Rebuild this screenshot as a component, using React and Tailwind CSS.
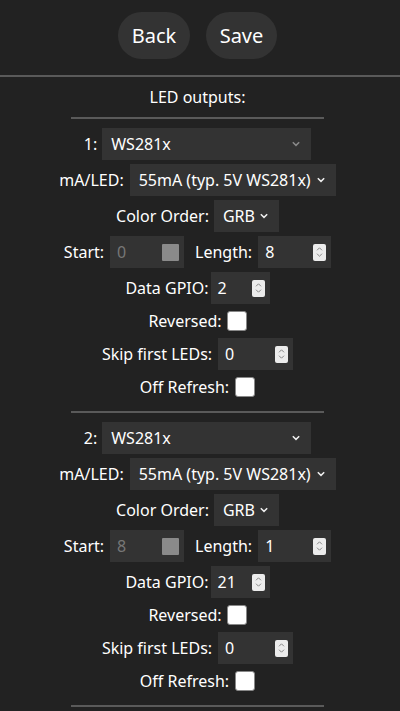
import React from "react";

const font = { fontFamily: '"Noto Sans", "Open Sans", sans-serif' };

function Chevron({ dim }) {
  return (
    <svg width="10" height="6" viewBox="0 0 10 6" className="shrink-0">
      <path
        d="M1.8 1.3 L5 4.4 L8.2 1.3"
        fill="none"
        stroke={dim ? "#8a8a8a" : "#f0f0f0"}
        strokeWidth="1.5"
      />
    </svg>
  );
}

function Select({ w, text, dim }) {
  return (
    <div
      className={`flex h-[32px] items-center justify-between bg-[#333] pl-[9px] pr-[10px] text-white ${w}`}
    >
      <span>{text}</span>
      <Chevron dim={dim} />
    </div>
  );
}

function Spinner() {
  return (
    <div className="flex h-[17px] w-[13px] flex-col items-center justify-center gap-[2px] rounded-[2px] bg-[#ececec]">
      <svg width="7" height="4" viewBox="0 0 7 4">
        <path d="M1 3.3 L3.5 0.8 L6 3.3" fill="none" stroke="#888" strokeWidth="1" />
      </svg>
      <svg width="7" height="4" viewBox="0 0 7 4">
        <path d="M1 0.7 L3.5 3.2 L6 0.7" fill="none" stroke="#888" strokeWidth="1" />
      </svg>
    </div>
  );
}

function NumInput({ w, value, disabled }) {
  return (
    <div
      className={`flex h-[32px] items-center justify-between bg-[#333] pl-[7px] pr-[5px] ${w} ${
        disabled ? "text-[#777]" : "text-white"
      }`}
    >
      <span>{value}</span>
      {disabled ? (
        <div className="h-[17px] w-[17px] rounded-[1px] bg-[#8a8a8a]" />
      ) : (
        <Spinner />
      )}
    </div>
  );
}

function Checkbox() {
  return (
    <div className="h-[20px] w-[20px] rounded-[3px] border border-[#888] bg-white" />
  );
}

function Row({ h = "h-[36px]", gap = "gap-[6px]", children }) {
  return (
    <div className={`flex items-center justify-center ${h} ${gap}`}>{children}</div>
  );
}

function Divider() {
  return <div className="mx-auto h-[2px] w-[253px] bg-[#5a5a5a]" />;
}

function LedOutput({ n, start, length, gpio, dimFirst }) {
  return (
    <div className="pt-[7px] pb-[9px]">
      <Row gap="gap-[5px]">
        <span>{n}:</span>
        <Select w="w-[209px]" text="WS281x" dim={dimFirst} />
      </Row>
      <Row gap="gap-[6px]">
        <span>mA/LED:</span>
        <Select w="w-[206px]" text="55mA (typ. 5V WS281x)" />
      </Row>
      <Row gap="gap-[5px]">
        <span>Color Order:</span>
        <Select w="w-[65px]" text="GRB" />
      </Row>
      <Row gap="gap-[6px]">
        <span>Start:</span>
        <NumInput w="w-[74px]" value={start} disabled />
        <span className="ml-[5px]">Length:</span>
        <NumInput w="w-[73px]" value={length} />
      </Row>
      <Row gap="gap-[2px]">
        <span>Data GPIO:</span>
        <NumInput w="w-[59px]" value={gpio} />
      </Row>
      <Row h="h-[30px]" gap="gap-[5px]">
        <span>Reversed:</span>
        <Checkbox />
      </Row>
      <Row gap="gap-[6px]">
        <span>Skip first LEDs:</span>
        <NumInput w="w-[75px]" value="0" />
      </Row>
      <Row h="h-[30px]" gap="gap-[6px]">
        <span>Off Refresh:</span>
        <Checkbox />
      </Row>
    </div>
  );
}

export default function App() {
  return (
    <div className="h-[711px] w-[400px] overflow-hidden bg-[#222] text-[16px] text-white" style={font}>
      <div className="w-[395px]">
        <div className="flex justify-center gap-[16px] pt-[12px]">
          <button className="h-[47px] w-[72px] rounded-full bg-[#333] text-[20px] text-white">
            Back
          </button>
          <button className="h-[47px] w-[71px] rounded-full bg-[#333] text-[20px] text-white">
            Save
          </button>
        </div>
        <div className="mt-[16px] h-[2px] w-[400px] bg-[#5a5a5a]" />
        <div className="flex h-[40px] items-center justify-center">LED outputs:</div>
        <Divider />
        <LedOutput n="1" start="0" length="8" gpio="2" dimFirst />
        <Divider />
        <LedOutput n="2" start="8" length="1" gpio="21" />
        <Divider />
      </div>
    </div>
  );
}
